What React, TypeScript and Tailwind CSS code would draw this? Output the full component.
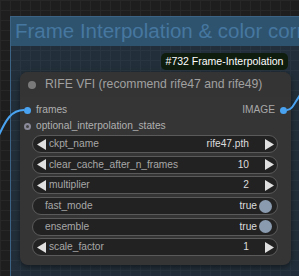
import React from 'react'

const font = { fontFamily: '"Liberation Sans", Arial, sans-serif' }

function LeftArrow() {
  return (
    <svg width="9" height="11" viewBox="0 0 9 11" className="shrink-0">
      <polygon points="9,0 9,11 0,5.5" fill="#e0e0e0" />
    </svg>
  )
}

function RightArrow() {
  return (
    <svg width="9" height="11" viewBox="0 0 9 11" className="shrink-0">
      <polygon points="0,0 0,11 9,5.5" fill="#e0e0e0" />
    </svg>
  )
}

function NumberWidget({ label, value }: { label: string; value: string }) {
  return (
    <div className="flex items-center h-[18px] rounded-full bg-[#222222] border border-[#5a5a5a] pl-[4px] pr-[3px]">
      <LeftArrow />
      <span className="ml-[3px] text-[#a8a8a8] text-[10.2px] flex-1 leading-none">{label}</span>
      <span className="text-[#dddddd] text-[10.2px] leading-none">{value}</span>
      <span className="ml-[16px]">
        <RightArrow />
      </span>
    </div>
  )
}

function ToggleWidget({ label }: { label: string }) {
  return (
    <div className="flex items-center h-[18px] rounded-full bg-[#222222] border border-[#5a5a5a] pl-[12px] pr-[5px]">
      <span className="text-[#a8a8a8] text-[10.2px] flex-1 leading-none">{label}</span>
      <span className="text-[#dddddd] text-[10.2px] leading-none">true</span>
      <span className="ml-[2px] w-[13px] h-[13px] rounded-full bg-[#8a9bb0]" />
    </div>
  )
}

export default function App() {
  return (
    <div
      className="relative w-[299px] h-[276px] overflow-hidden bg-[#1e1e1e] bg-[linear-gradient(to_right,#272727_1px,transparent_1px),linear-gradient(to_bottom,#272727_1px,transparent_1px)] bg-[size:10px_10px]"
      style={font}
    >
      {/* group frame */}
      <div className="absolute left-[10px] top-[16px] w-[320px] h-[300px] border-l border-t border-[#3c6384] bg-[#2f5a7e]/30 flex flex-col">
        <div className="h-[29px] bg-[#2e536e] flex items-center pl-[4px] whitespace-nowrap overflow-hidden">
          <span className="text-[20.5px] text-[#4677a0] leading-none">Frame Interpolation &amp; color correction</span>
        </div>
      </div>

      {/* badge */}
      <div className="absolute left-[161px] top-[53px] w-[127px] h-[17px] rounded-[5px] bg-[#0f1d0f] flex items-center justify-center">
        <span className="text-white text-[10.5px] leading-none whitespace-nowrap">#732 Frame-Interpolation</span>
      </div>

      {/* node */}
      <div className="absolute left-[20px] top-[72px] w-[271px] h-[193px] rounded-[8px] bg-[#353535] shadow-[0_2px_6px_rgba(0,0,0,0.5)] flex flex-col">
        <div className="h-[25px] flex items-center pl-[8px] rounded-t-[8px] bg-[#343434]">
          <span className="w-[8px] h-[8px] rounded-full bg-[#7a7a7a]" />
          <span className="ml-[9px] text-[12.2px] text-[#a0a0a0] leading-none whitespace-nowrap">
            RIFE VFI (recommend rife47 and rife49)
          </span>
        </div>

        <div className="mt-[5px] h-[16px] flex items-center pl-[4px] pr-[4px]">
          <span className="w-[7px] h-[7px] rounded-full bg-[#4aa3f0]" />
          <span className="ml-[5px] text-[10.2px] text-[#b0b0b0] leading-none flex-1">frames</span>
          <span className="text-[10.2px] text-[#a8a8a8] leading-none">IMAGE</span>
          <span className="ml-[5px] w-[7px] h-[7px] rounded-full bg-[#4aa3f0]" />
        </div>
        <div className="h-[16px] flex items-center pl-[4px]">
          <span className="w-[7px] h-[7px] rounded-full border-[2px] border-[#8a8a9a] bg-[#444444]" />
          <span className="ml-[5px] text-[10.2px] text-[#b0b0b0] leading-none">optional_interpolation_states</span>
        </div>

        <div className="mt-[1px] flex flex-col gap-[2.7px] pl-[12px] pr-[13px]">
          <NumberWidget label="ckpt_name" value="rife47.pth" />
          <NumberWidget label="clear_cache_after_n_frames" value="10" />
          <NumberWidget label="multiplier" value="2" />
          <ToggleWidget label="fast_mode" />
          <ToggleWidget label="ensemble" />
          <NumberWidget label="scale_factor" value="1" />
        </div>
      </div>

      {/* links */}
      <svg className="absolute inset-0 pointer-events-none" width="299" height="276">
        <path d="M -4 142 C 6 118, 12 110, 24 110" stroke="#4aa3f0" strokeWidth="2" fill="none" />
        <path d="M 287 110 C 292 110, 294 104, 300 95" stroke="#4aa3f0" strokeWidth="2" fill="none" />
      </svg>
    </div>
  )
}
